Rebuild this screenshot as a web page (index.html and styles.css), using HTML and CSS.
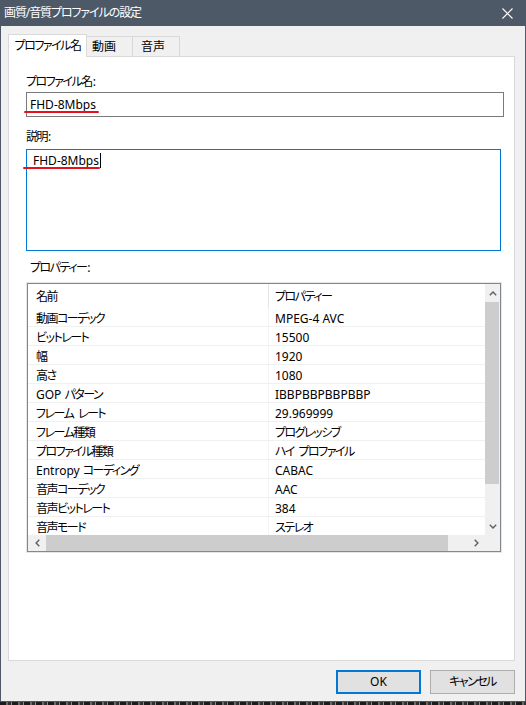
FILE: index.html
```html
<!DOCTYPE html>
<html lang="ja">
<head>
<meta charset="utf-8">
<title>画質/音質プロファイルの設定</title>
<link rel="stylesheet" href="styles.css">
</head>
<body>
<div class="window">
  <div class="titlebar">
    <span class="title ja">画質/音質プロファイルの設定</span>
    <svg class="close" width="11" height="11" viewBox="0 0 11 11"><path d="M0.5 0.5L10.5 10.5M10.5 0.5L0.5 10.5" stroke="#ffffff" stroke-width="1.1" fill="none"/></svg>
  </div>
  <div class="client">
    <div class="tabs">
      <div class="tab tab-active ja">プロファイル名</div>
      <div class="tab tab-video ja">動画</div>
      <div class="tab tab-audio ja">音声</div>
    </div>
    <div class="panel">
      <div class="label ja">プロファイル名<span class="colon">:</span></div>
      <div class="field">
        <div class="input">FHD-8Mbps</div>
        <span class="mark mark-1"></span>
      </div>
      <div class="label label-desc ja">説明<span class="colon">:</span></div>
      <div class="field">
        <div class="textarea">FHD-8Mbps<span class="caret"></span></div>
        <span class="mark mark-2"></span>
      </div>
      <div class="label label-props ja">プロパティー<span class="colon">:</span></div>
      <div class="listview">
        <div class="lv-content">
          <div class="lv-header"><div class="c1 ja">名前</div><div class="c2 hdiv ja">プロパティー</div></div>
          <div class="lv-row"><div class="c1 ja">動画コーデック</div><div class="c2">MPEG-4 AVC</div></div>
          <div class="lv-row"><div class="c1 ja">ビットレート</div><div class="c2">15500</div></div>
          <div class="lv-row"><div class="c1 ja">幅</div><div class="c2">1920</div></div>
          <div class="lv-row"><div class="c1 ja">高さ</div><div class="c2">1080</div></div>
          <div class="lv-row"><div class="c1">GOP <span class="ja">パターン</span></div><div class="c2">IBBPBBPBBPBBP</div></div>
          <div class="lv-row"><div class="c1 ja">フレーム レート</div><div class="c2">29.969999</div></div>
          <div class="lv-row"><div class="c1 ja">フレーム種類</div><div class="c2 ja">プログレッシブ</div></div>
          <div class="lv-row"><div class="c1 ja">プロファイル種類</div><div class="c2 ja">ハイ プロファイル</div></div>
          <div class="lv-row"><div class="c1">Entropy <span class="ja">コーディング</span></div><div class="c2">CABAC</div></div>
          <div class="lv-row"><div class="c1 ja">音声コーデック</div><div class="c2">AAC</div></div>
          <div class="lv-row"><div class="c1 ja">音声ビットレート</div><div class="c2">384</div></div>
          <div class="lv-row"><div class="c1 ja">音声モード</div><div class="c2 ja">ステレオ</div></div>
        </div>
        <div class="vscroll">
          <div class="sb-btn"><svg width="8" height="5" viewBox="0 0 8 5"><path d="M0.8 4.3L4 1.1L7.2 4.3" stroke="#606060" stroke-width="1.4" fill="none"/></svg></div>
          <div class="v-thumb"></div>
          <div class="sb-space"></div>
          <div class="sb-btn"><svg width="8" height="5" viewBox="0 0 8 5"><path d="M0.8 0.7L4 3.9L7.2 0.7" stroke="#606060" stroke-width="1.4" fill="none"/></svg></div>
        </div>
        <div class="hscroll">
          <div class="sb-btn"><svg width="5" height="8" viewBox="0 0 5 8"><path d="M4.3 0.8L1.1 4L4.3 7.2" stroke="#606060" stroke-width="1.4" fill="none"/></svg></div>
          <div class="h-thumb"></div>
          <div class="sb-space"></div>
          <div class="sb-btn"><svg width="5" height="8" viewBox="0 0 5 8"><path d="M0.7 0.8L3.9 4L0.7 7.2" stroke="#606060" stroke-width="1.4" fill="none"/></svg></div>
        </div>
        <div class="corner"></div>
      </div>
    </div>
    <div class="buttons">
      <div class="btn btn-ok">OK</div>
      <div class="btn ja">キャンセル</div>
    </div>
  </div>
</div>
<div class="taskbar"></div>
</body>
</html>
```

FILE: styles.css
```css
html, body {
  margin: 0;
  padding: 0;
}

body {
  width: 526px;
  height: 705px;
  overflow: hidden;
  background: #2a2a2a;
  font-family: "Noto Sans", "Noto Sans CJK JP", sans-serif;
  font-size: 12px;
  font-feature-settings: "palt" 1;
  color: #000;
}

.ja {
  letter-spacing: -1.5px;
  word-spacing: 3px;
}

.colon {
  letter-spacing: 0;
  margin-left: 1px;
}

.window {
  box-sizing: border-box;
  width: 526px;
  height: 702px;
  background: #f0f0f0;
  border: 1px solid #4e5968;
  border-top: 0;
  display: flex;
  flex-direction: column;
}

.titlebar {
  height: 26px;
  margin: 0 -1px;
  background: #4e5968;
  display: flex;
  align-items: center;
  justify-content: space-between;
  padding: 0 13px 0 4px;
  flex: none;
}

.title {
  color: #ffffff;
  font-size: 12px;
  line-height: 16px;
  letter-spacing: -1.1px;
}

.close {
  display: block;
}

.client {
  flex: 1;
  display: flex;
  flex-direction: column;
  padding: 8px 10px 0 7px;
}

.tabs {
  display: flex;
  align-items: flex-end;
  height: 23px;
  margin-bottom: -1px;
  position: relative;
  z-index: 1;
}

.tab {
  box-sizing: border-box;
  height: 20px;
  margin-bottom: 1px;
  border-top: 1px solid #d9d9d9;
  border-right: 1px solid #d9d9d9;
  background: #f0f0f0;
  display: flex;
  align-items: center;
  line-height: 16px;
  padding-top: 1px;
}

.tab-active {
  height: 23px;
  margin-bottom: 0;
  width: 79px;
  border-left: 1px solid #d9d9d9;
  background: #ffffff;
  justify-content: center;
  padding-top: 0;
}

.tab-video {
  width: 46px;
  padding-left: 5px;
  letter-spacing: 0;
}

.tab-audio {
  width: 47px;
  padding-left: 8px;
  letter-spacing: 0;
}

.panel {
  box-sizing: border-box;
  height: 605px;
  background: #ffffff;
  border: 1px solid #d9d9d9;
  padding-left: 17px;
  flex: none;
}

.label {
  line-height: 16px;
  margin-top: 17px;
}

.label-desc {
  margin-top: 12px;
}

.label-props {
  margin-top: 9px;
  padding-left: 4px;
}

.field {
  position: relative;
}

.input {
  box-sizing: border-box;
  margin-top: 2px;
  width: 478px;
  height: 25px;
  border: 1px solid #7a7a7a;
  padding-left: 3px;
  line-height: 23px;
}

.textarea {
  box-sizing: border-box;
  margin-top: 4px;
  width: 475px;
  height: 102px;
  border: 1px solid #0078d7;
  padding: 3px 6px;
  line-height: 16px;
}

.caret {
  display: inline-block;
  width: 1px;
  height: 15px;
  background: #000;
  vertical-align: -3px;
  margin-left: 1px;
}

.mark {
  position: absolute;
  height: 2px;
  background: #e8101c;
  border-radius: 1px;
}

.mark-1 {
  left: -2px;
  top: 19px;
  width: 75px;
}

.mark-2 {
  left: -3px;
  top: 18px;
  width: 77px;
}

.listview {
  box-sizing: border-box;
  margin-top: 7px;
  margin-left: 1px;
  width: 474px;
  height: 269px;
  border: 1px solid #828790;
  box-shadow: 0 0 0 1px #e6e6e6;
  display: grid;
  grid-template-columns: 1fr 15px;
  grid-template-rows: 1fr 16px;
}

.lv-content {
  overflow: hidden;
  background: #ffffff;
}

.lv-header {
  display: flex;
  height: 24px;
}

.lv-header .c1,
.lv-header .c2 {
  padding-top: 5px;
}

.lv-row {
  box-sizing: border-box;
  display: flex;
  height: 19px;
  border-bottom: 1px solid #f0f0f0;
}

.c1 {
  box-sizing: border-box;
  width: 240px;
  padding-left: 8px;
  padding-top: 3px;
  white-space: nowrap;
  line-height: 16px;
}

.c2 {
  flex: 1;
  padding-left: 6px;
  padding-top: 3px;
  border-left: 1px solid #f4f4f4;
  white-space: nowrap;
  line-height: 16px;
}

.hdiv {
  border-left: 1px solid #e5e5e5;
}

.vscroll {
  background: #f0f0f0;
  display: flex;
  flex-direction: column;
}

.hscroll {
  background: #f0f0f0;
  display: flex;
}

.sb-btn {
  flex: none;
  width: 18px;
  height: 18px;
  display: flex;
  align-items: center;
  justify-content: center;
}

.vscroll .sb-btn {
  width: 15px;
}

.hscroll .sb-btn {
  height: 16px;
}

.sb-btn svg {
  display: block;
}

.v-thumb {
  flex: none;
  height: 182px;
  margin-right: 1px;
  background: #cdcdcd;
}

.h-thumb {
  flex: none;
  width: 402px;
  background: #cdcdcd;
}

.sb-space {
  flex: 1;
}

.corner {
  background: #f0f0f0;
}

.buttons {
  display: flex;
  justify-content: flex-end;
  gap: 9px;
  margin-top: 9px;
}

.btn {
  box-sizing: border-box;
  width: 85px;
  height: 24px;
  background: #e1e1e1;
  border: 1px solid #adadad;
  display: flex;
  align-items: center;
  justify-content: center;
  line-height: 16px;
}

.btn-ok {
  border: 2px solid #0078d7;
}

.taskbar {
  height: 3px;
  background: repeating-linear-gradient(90deg, #1c1c1c 0 6px, #6a6a6a 6px 8px, #303030 8px 11px, #8a8a8a 11px 12px);
}
```
